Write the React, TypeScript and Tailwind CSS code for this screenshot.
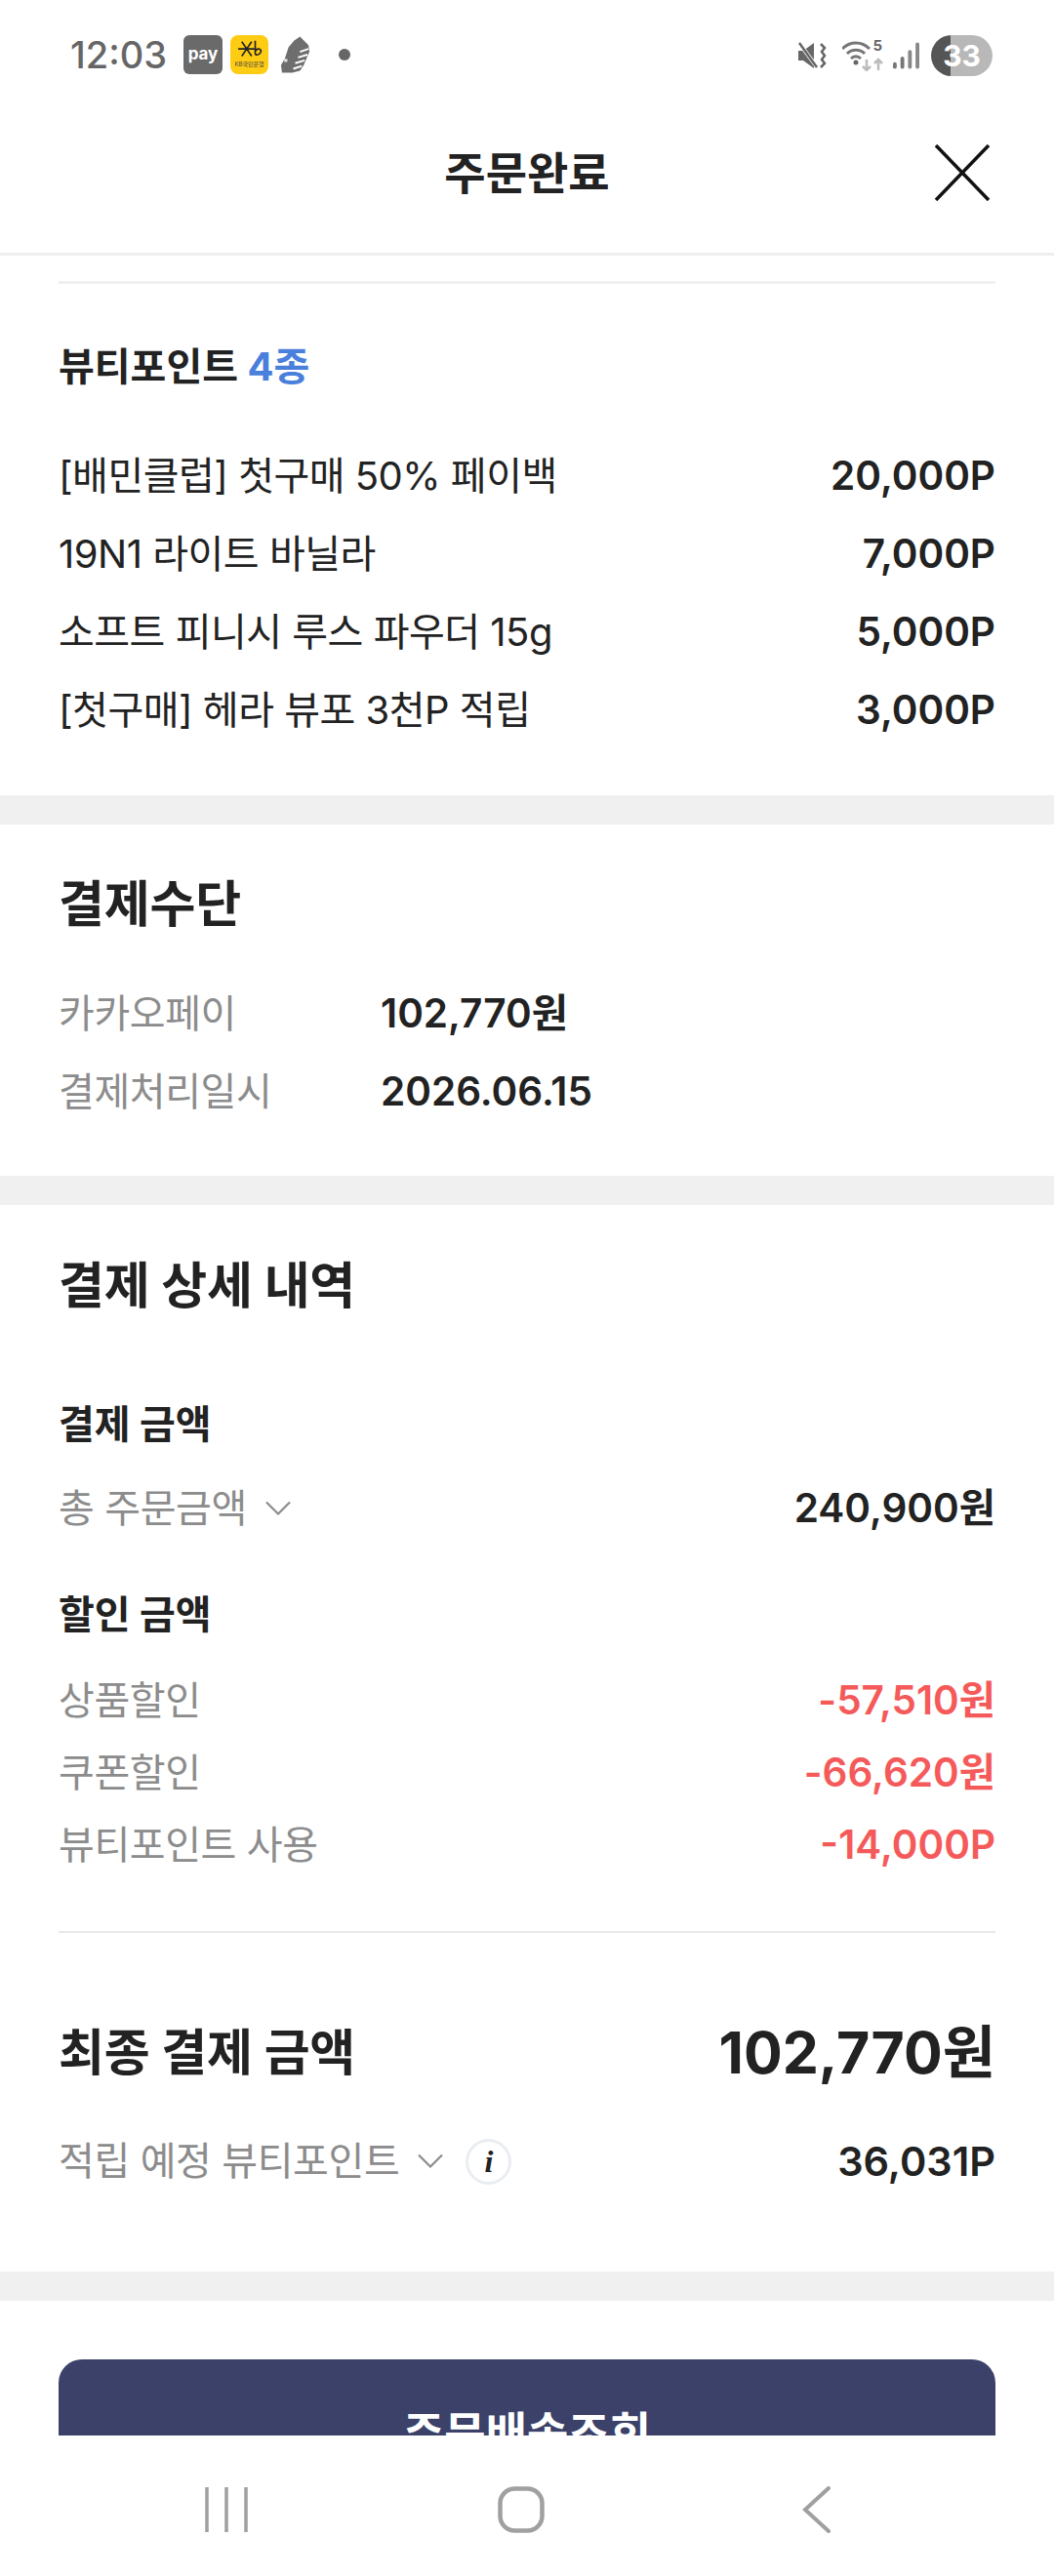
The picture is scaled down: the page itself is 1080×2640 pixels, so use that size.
const sans = "font-['Inter','Noto_Sans_CJK_KR',sans-serif]";

const beautyItems = [
  { name: '[배민클럽] 첫구매 50% 페이백', point: '20,000P' },
  { name: '19N1 라이트 바닐라', point: '7,000P' },
  { name: '소프트 피니시 루스 파우더 15g', point: '5,000P' },
  { name: '[첫구매] 헤라 뷰포 3천P 적립', point: '3,000P' },
];

const discounts = [
  { label: '상품할인', value: '-57,510원' },
  { label: '쿠폰할인', value: '-66,620원' },
  { label: '뷰티포인트 사용', value: '-14,000P' },
];

function Chevron() {
  return (
    <svg viewBox="0 0 26 16" className="ml-[19px] h-[16px] w-[26px]" fill="none" stroke="#8c8c8c" strokeWidth="2.200">
      <path d="M1 1.500l12 12 12-12" />
    </svg>
  );
}

function StatusBar() {
  return (
    <div className="flex h-[100px] shrink-0 items-start justify-between pl-[72px] pr-[63px] pt-[36px]">
      <div className="flex items-center">
        <span className="w-[100px] text-[38px] leading-[40px] font-medium text-[#666666]">12:03</span>
        <div className="ml-[16px] flex h-[40px] w-[40px] items-center justify-center rounded-[6px] bg-[#6a6a6a] text-[17px] font-bold text-white">
          pay
        </div>
        <div className="ml-[8px] flex h-[40px] w-[39px] flex-col items-center rounded-[8px] bg-[#ffcc14] pt-[4px]">
          <svg viewBox="0 0 30 24" className="h-[22px] w-[28px]" fill="none" stroke="#222" strokeWidth="1.800">
            <path d="M6 3l11 16M17 3L6 19M2 11h18M21 2v15M21 14c2-5 8-3 6 1s-6 3-6 1" />
          </svg>
          <span className="text-[6px] leading-[8px] whitespace-nowrap text-[#444]">KB국민은행</span>
        </div>
        <svg viewBox="0 0 32 40" className="ml-[12px] h-[40px] w-[31px]">
          <path d="M21 1l9 9 1 7-6 14-4 6-8 2-11 0-1-8 4-7 4-12 6-7z" fill="#6e6e6e" />
          <path d="M30 14l-9 3M29 20l-10 3M26 26l-10 3M23 32l-9 3" stroke="#fff" strokeWidth="2" />
          <circle cx="6" cy="26" r="2" fill="#ddd" />
        </svg>
        <div className="ml-[29px] h-[12px] w-[12px] rounded-full bg-[#666666]" />
      </div>
      <div className="flex items-center">
        <svg viewBox="0 0 30 30" className="h-[30px] w-[30px]" fill="none">
          <path d="M1 10h5L17 2v26L6 20H1z" fill="#666" />
          <path d="M1 1l20 27" stroke="#fff" strokeWidth="4" />
          <path d="M2 2l18 25" stroke="#666" strokeWidth="2.500" />
          <path d="M24 3l4 4-3 4 3 4-3 4 3 4-4 4" stroke="#666" strokeWidth="2.500" />
        </svg>
        <div className="relative ml-[16px] h-[32px] w-[42px]">
          <svg viewBox="0 0 42 32" className="h-[32px] w-[42px]" fill="none">
            <path d="M0 9c8-8 20-8 28 0M5 14c5-5 13-5 18 0M9 19c3-3 7-3 10 0" stroke="#777" strokeWidth="3" />
            <circle cx="14" cy="23" r="2.500" fill="#666" />
            <path d="M25 20v11M21 27l4 4 4-4" stroke="#bbb" strokeWidth="2.500" />
            <path d="M37 31V20M33 24l4-4 4 4" stroke="#bbb" strokeWidth="2.500" />
          </svg>
          <span className="absolute right-[1px] top-[-3px] text-[15px] leading-[18px] font-bold text-[#666666]">5</span>
        </div>
        <svg viewBox="0 0 28 30" className="ml-[10px] h-[30px] w-[27px]">
          <rect x="0" y="22" width="4" height="7" rx="2" fill="#777" />
          <rect x="8" y="16" width="4" height="13" rx="2" fill="#777" />
          <rect x="16" y="9" width="4" height="20" rx="2" fill="#888" />
          <rect x="24" y="1" width="4" height="28" rx="2" fill="#888" />
        </svg>
        <div className="ml-[12px] flex h-[42px] w-[63px] items-center justify-center rounded-full bg-[linear-gradient(90deg,#555555_32%,#b8b8b8_32%)] text-[30px] font-bold text-white">
          33
        </div>
      </div>
    </div>
  );
}

function Header() {
  return (
    <div className="relative flex h-[162px] shrink-0 items-start justify-center border-b-[3px] border-[#eeeeee] pt-[50px]">
      <h1 className="text-[46px] leading-[54px] font-bold text-[#222222]">주문완료</h1>
      <svg viewBox="0 0 58 58" className="absolute right-[65px] top-[48px] h-[58px] w-[58px]" stroke="#111" strokeWidth="3.500">
        <path d="M2 1l54 56M56 1L2 57" />
      </svg>
    </div>
  );
}

function SectionGap() {
  return <div className="h-[30px] shrink-0 bg-[#f0f0f0]" />;
}

function NavBar() {
  return (
    <div className="flex h-[144px] shrink-0 items-center bg-white pl-[210px] pt-[8px]">
      <svg viewBox="0 0 44 46" className="h-[46px] w-[44px]" stroke="#a0a0a0" strokeWidth="3.500">
        <path d="M2 0v46M22 0v46M42 0v46" />
      </svg>
      <svg viewBox="0 0 48 48" className="ml-[256px] h-[48px] w-[48px]" fill="none" stroke="#a0a0a0" strokeWidth="4.500">
        <rect x="2.500" y="2.500" width="43" height="43" rx="15" />
      </svg>
      <svg viewBox="0 0 30 48" className="ml-[264px] h-[48px] w-[30px]" fill="none" stroke="#a0a0a0" strokeWidth="4" strokeLinecap="round">
        <path d="M27 2L3 24l24 22" />
      </svg>
    </div>
  );
}

export default function App() {
  return (
    <div className={`flex h-[2640px] w-[1080px] flex-col overflow-hidden bg-white text-[#222222] ${sans}`}>
      <StatusBar />
      <Header />

      <div className="min-h-0 flex-1 overflow-hidden">
        <section className="h-[553px] px-[60px] pt-[26px]">
          <div className="h-[3px] bg-[#f0f0f0]" />
          <h2 className="mt-[61px] text-[40px] leading-[48px] font-bold">
            뷰티포인트 <span className="text-[#4a7fdc]">4종</span>
          </h2>
          <ul className="mt-[48px]">
            {beautyItems.map((item) => (
              <li key={item.name} className="flex h-[80px] items-center justify-between">
                <span className="text-[40px] leading-[50px] tracking-[-0.5px]">{item.name}</span>
                <span className="text-[40.5px] leading-[50px] font-semibold">{item.point}</span>
              </li>
            ))}
          </ul>
        </section>

        <SectionGap />

        <section className="h-[360px] px-[60px] pt-[50px]">
          <h2 className="text-[51px] leading-[64px] font-bold tracking-[-0.2px]">결제수단</h2>
          <div className="mt-[40px] flex h-[80px] items-center">
            <span className="w-[330px] text-[40px] tracking-[-0.4px] text-[#8c8c8c]">카카오페이</span>
            <span className="text-[40.5px] font-semibold">102,770원</span>
          </div>
          <div className="flex h-[80px] items-center">
            <span className="w-[330px] text-[40px] tracking-[-0.4px] text-[#8c8c8c]">결제처리일시</span>
            <span className="text-[40.5px] font-semibold">2026.06.15</span>
          </div>
        </section>

        <SectionGap />

        <section className="h-[1093px] px-[60px] pt-[51px]">
          <h2 className="text-[51px] leading-[64px] font-bold tracking-[-0.2px]">결제 상세 내역</h2>

          <h3 className="mt-[85px] text-[40px] leading-[50px] font-bold">결제 금액</h3>
          <div className="mt-[31px] flex h-[60px] items-center justify-between">
            <span className="flex items-center text-[40px] tracking-[-0.4px] text-[#8c8c8c]">
              총 주문금액
              <Chevron />
            </span>
            <span className="text-[40.5px] font-semibold">240,900원</span>
          </div>

          <h3 className="mt-[54px] text-[40px] leading-[50px] font-bold">할인 금액</h3>
          <ul className="mt-[26px]">
            {discounts.map((row) => (
              <li key={row.label} className="flex h-[74px] items-center justify-between">
                <span className="text-[40px] tracking-[-0.4px] text-[#8c8c8c]">{row.label}</span>
                <span className="text-[40.5px] font-semibold text-[#f55a5a]">{row.value}</span>
              </li>
            ))}
          </ul>

          <div className="mt-[51px] h-[2px] bg-[#e8e8e8]" />

          <div className="mt-[87px] flex items-center justify-between">
            <span className="text-[51px] leading-[72px] font-bold tracking-[-0.2px]">최종 결제 금액</span>
            <span className="text-[59px] leading-[72px] font-bold">102,770원</span>
          </div>
          <div className="mt-[50px] flex h-[50px] items-center justify-between">
            <span className="flex items-center text-[40px] tracking-[-0.4px] text-[#8c8c8c]">
              적립 예정 뷰티포인트
              <Chevron />
              <span className="ml-[23px] flex h-[47px] w-[47px] items-center justify-center rounded-full border-[3px] border-[#e9edf1] font-['Liberation_Serif',serif] text-[32px] font-bold text-[#222222] italic">
                i
              </span>
            </span>
            <span className="text-[41.5px] font-semibold">36,031P</span>
          </div>
        </section>

        <SectionGap />

        <div className="px-[60px] pt-[60px]">
          <button className="flex h-[150px] w-full items-center justify-center rounded-[24px] bg-[#3b4169] text-[46px] font-bold text-white">
            주문배송조회
          </button>
        </div>
      </div>

      <NavBar />
    </div>
  );
}
